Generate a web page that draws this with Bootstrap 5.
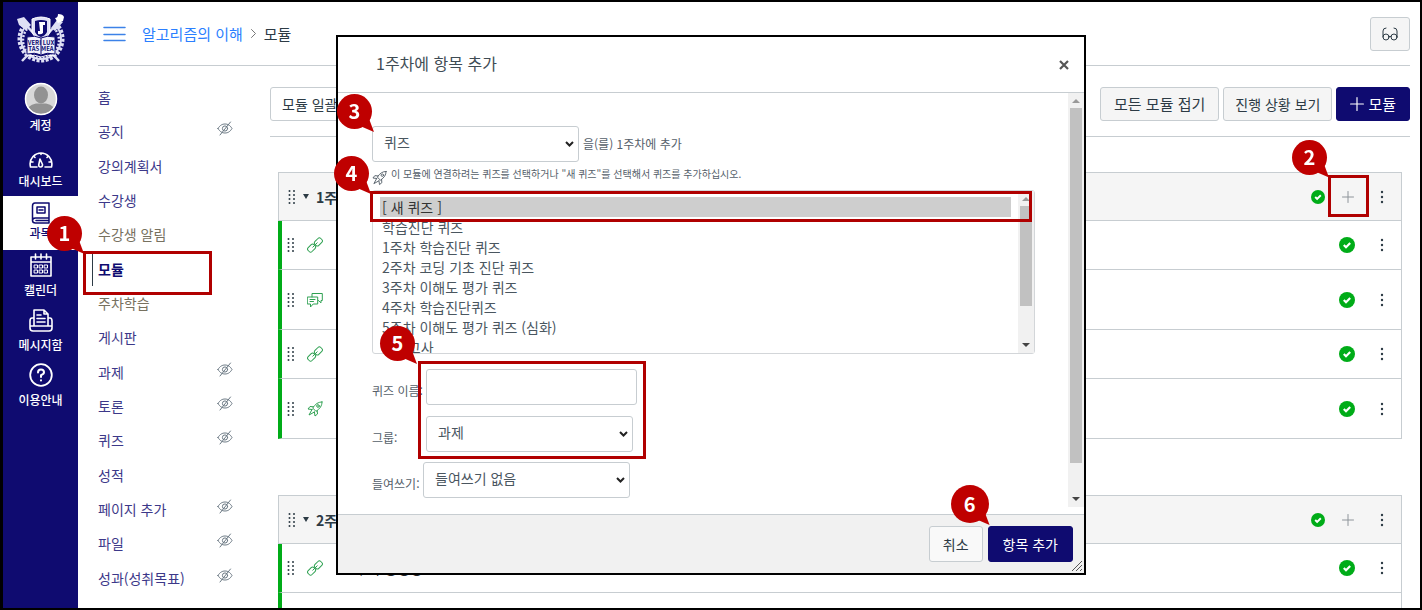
<!DOCTYPE html>
<html lang="ko">
<head>
<meta charset="utf-8">
<meta name="viewport" content="width=device-width, initial-scale=1">
<title>알고리즘의 이해 - 모듈</title>
<link href="https://cdn.jsdelivr.net/npm/bootstrap@5.3.0/dist/css/bootstrap.min.css" rel="stylesheet">
<style>
:root{--navy:#0f0b70;--line:#c7cdd1;--ink:#2d3b45;--alert:#bf0000}
body{font-family:"Noto Sans CJK KR","Noto Sans",sans-serif;font-size:14px;line-height:20px;color:var(--ink)}
a{text-decoration:none}
.frame{border:2px solid #000;border-left-width:3px}
.ic{display:block;fill:none;stroke:currentColor;stroke-width:1;stroke-linecap:round;stroke-linejoin:round}
.global-nav{width:75px;background:var(--navy);font-size:12px;font-weight:500;line-height:18px}
.global-nav a{color:#fff;height:55px;padding-bottom:6px}
.global-nav a.account{height:59px}
.global-nav a.current{background:#fff;color:var(--navy);height:54px;padding-bottom:8px}
.main-area{padding:0 10px 0 20px;min-width:0}
.page-head{height:64px;border-bottom:1px solid var(--line);font-size:15px}
.page-head a{color:#2b7fff}
.tool-btn{--bs-btn-color:#2d3b45;--bs-btn-bg:#f5f5f5;--bs-btn-border-color:var(--line);--bs-btn-hover-bg:#e8e8e8;--bs-btn-hover-border-color:var(--line);--bs-btn-border-radius:3px;height:34px;padding:0 11px;font-size:14px;line-height:20px}
.tool-btn.large{font-size:15px;padding:0 13px}
.tool-btn.navy{--bs-btn-bg:var(--navy);--bs-btn-color:#fff;--bs-btn-border-color:var(--navy);--bs-btn-hover-bg:#1c188c;--bs-btn-hover-color:#fff}
.page-body,.course-nav{min-height:0}
.course-nav{width:180px;padding:14px 45px 13px 0}
.course-nav a{color:#3c3889}
.course-nav a.off{color:#77715f}
.course-nav a.active{color:var(--navy);font-weight:700}
.course-nav a.active::before{content:"";position:absolute;left:-6px;top:0;height:100%;border-left:1px solid #2d3b45}
.course-nav .ic{color:#6a7883;margin-top:-5px}
.toolbar-row{padding:21px 0 15px 0;border-bottom:1px solid var(--line);margin-left:-8px}
.module-box{border:1px solid var(--line);border-bottom:0;margin:35px 8px 0 0}
.module-box + .module-box{margin-top:56px}
.module-head{height:48px;background:#f5f5f5;padding:0 14px 0 9px;border-bottom:1px solid var(--line);font-weight:700}
.module-head .caret{margin:0 7px}
.add-cell{margin:0 23px 0 17px}
.module-row{height:49px;border-bottom:1px solid var(--line);border-left:4px solid #00ac18;margin-left:-1px;padding:0 14px 0 5px}
.module-row.tall{height:60px}
.module-row .type{color:#2fa152;margin-left:12px}
.module-row .state{margin-right:22px}
.icon-btn{background:none;border:0;padding:0;color:inherit}
.grip,.kebab{fill:#2d3b45}
.dialog-layer{position:fixed;inset:35px 0 auto 0;pointer-events:none}
.dialog-box{width:750px;max-width:100%;border:2px solid #000;background:#fff;pointer-events:auto}
.dialog-head{height:56px;padding:0 15px 0 38px;border-bottom:1px solid var(--line);color:#3f4c55}
.dialog-head h1{font-size:16px;line-height:24px;font-weight:400;padding-bottom:4px}
.dialog-content{padding:33px 49px 16px 34px;color:#55606a}
.dialog-foot{background:#f1f1f1;border-top:1px solid var(--line);padding:11px;gap:5px}
.dialog-foot .tool-btn{height:36px;padding:0 13px}
.dialog-foot .tool-btn.navy{padding:0 14px}
.dialog-foot .tool-btn:not(.navy){--bs-btn-bg:#f9f9f9}
.field{height:36px;border:1px solid var(--line);border-radius:3px;background-color:#fff;color:#4a565f;font-size:14px;line-height:20px;padding:5px 30px 9px 11px;width:207px;flex:none}
.field.form-select{background-position:right 3px center;background-size:11px 8px;background-image:url("data:image/svg+xml,%3Csvg xmlns='http://www.w3.org/2000/svg' viewBox='0 0 11 8'%3E%3Cpath d='M2 2l3.500 3.500L9 2' fill='none' stroke='%23222' stroke-width='2'/%3E%3C/svg%3E")}
input.field{width:211px}
.suffix{font-size:12px;line-height:16px}
.note{font-size:10px;line-height:16px}
.note .ic{margin:4px 0 -4px}
.list-wrap{margin-bottom:15px}
.stack{display:flex;flex-direction:column;gap:11px;margin-bottom:10px}
.lbl{font-size:12px;line-height:18px;padding-top:8px;width:54px;white-space:nowrap}
.lbl.narrow{width:51px}
.quiz-list{height:164px;border:1px solid #d3d6d9;border-radius:3px;padding:6px 23px 0 7px;overflow:hidden;color:#4a565f;font-size:14px;width:100%;display:block;scrollbar-width:none;background:#fff}
.quiz-list::-webkit-scrollbar{display:none}
.quiz-list option{height:20px;line-height:20px;padding:0 2px;min-height:0}
.quiz-list option:checked{background:#cecece linear-gradient(#cecece,#cecece);color:#333}
.bar{position:absolute;width:16px;background:#f1f1f1;display:flex;flex-direction:column;align-items:center;justify-content:space-between}
.bar svg{flex:none;height:15px}
.bar i{width:12px;background:#c1c1c1}
.bar.outer{right:0;top:0;bottom:7px}
.bar.outer i{flex:0 0 355px;margin-bottom:auto}
.bar.inner{right:1px;top:1px;bottom:1px}
.bar.inner i{flex:0 0 100px;margin-bottom:auto}
.ring{position:absolute;border:3px solid #b00000;z-index:3;pointer-events:none}
.pin{position:absolute;right:100%;bottom:100%;width:35px;height:35px;border-radius:50%;background:var(--alert);color:#fff;font-size:20px;font-weight:700;line-height:34px;text-align:center;z-index:4;pointer-events:none}
.pin::after{content:"";position:absolute;left:22px;top:22px;width:15px;height:16px;background:var(--alert);clip-path:polygon(0 60%,60% 0,100% 100%)}
.ring .pin{margin:0 4px 3px 0}
.ring-nav{left:-15px;right:21px;top:-1px;bottom:-9px}
.ring-plus{left:-14px;top:-12px;width:41px;height:42px}
.ring-list{left:-2px;right:3px;top:1px;height:31px}
.ring-fields{left:46px;width:228px;top:-8px;height:98px}
.ring-fields .pin{margin-right:6px}
.pin.on-corner{margin-bottom:-3px}
.pin.big{width:38px;height:38px;line-height:37px;margin:0 -1px 3px 0}
.pin.big::after{left:24px;top:24px}
.resize{position:absolute;right:1px;bottom:1px}
</style>
</head>
<body>
<svg class="d-none">
  <symbol id="eye" viewBox="0 0 16 15"><path d="M1 7.500C3 4 5.500 3 8 3s5 1 7 4.500C13 11 10.500 12 8 12S3 11 1 7.500zM13.500 1L3 14"/><circle cx="8" cy="7.500" r="2.600"/></symbol>
  <symbol id="link" viewBox="0 0 16 16"><rect x="7.300" y="2.200" width="8.200" height="5.400" rx="2" transform="rotate(-45 11.400 4.900)"/><rect x=".5" y="8.400" width="8.200" height="5.400" rx="2" transform="rotate(-45 4.600 11.100)"/><path d="M5.800 10.200l4.400-4.400"/></symbol>
  <symbol id="talk" viewBox="0 0 16 16"><path d="M5 5V1.500h10.300v7H14v2.300l-2.600-2.300M.7 5h10v7H6.200L3.500 15v-3H.7zM3 7.500h5M3 9.500h3.500"/></symbol>
  <symbol id="rocket" viewBox="0 0 16 16"><path d="M15 1c-4 0-6.500 2-9.300 6L9 10.400C13 7.500 15 5 15 1zM6.500 5.800L3 5.500 1 8l4 .5M10.200 9.500L10.500 13 8 15l-.6-4M5 8.500L2 14l5.400-3"/><circle cx="11" cy="5" r="1.300"/></symbol>
  <symbol id="grip" viewBox="0 0 8 16"><g stroke="none"><circle cx="1.500" cy="2" r="1"/><circle cx="1.500" cy="6" r="1"/><circle cx="1.500" cy="10" r="1"/><circle cx="1.500" cy="14" r="1"/><circle cx="6" cy="2" r="1"/><circle cx="6" cy="6" r="1"/><circle cx="6" cy="10" r="1"/><circle cx="6" cy="14" r="1"/></g></symbol>
  <symbol id="kebab" viewBox="0 0 10 14"><g stroke="none"><circle cx="5" cy="2" r="1.200"/><circle cx="5" cy="7" r="1.200"/><circle cx="5" cy="12" r="1.200"/></g></symbol>
  <symbol id="check" viewBox="0 0 16 16"><circle cx="8" cy="8" r="8" fill="#00ac18" stroke="none"/><path d="M4.800 8L7 10.200l4.200-4.200" fill="none" stroke="#fff" stroke-width="2.200"/></symbol>
  <symbol id="plus" viewBox="0 0 12 12"><path d="M6 .5v11M.5 6h11"/></symbol>
</svg>

<div class="frame vh-100 d-flex overflow-hidden">
  <nav class="global-nav d-flex flex-column flex-shrink-0 text-center" aria-label="전체 메뉴">
    <div class="d-flex justify-content-center pt-2 pb-3">
      <svg width="56" height="56" viewBox="0 0 56 56" fill="none" stroke="#dfe0f5" role="img" aria-label="로고">
        <path d="M12 14L46 51M44 14L9 51" stroke-width="2.500"/>
        <path d="M4 9l7-2 7 8-5 5-7-5zM38 18l6-8 6 2-8 9z" fill="#dfe0f5" stroke="none"/>
        <path d="M42 8q3 0 3-4 5 0 6 3l-1 4-5 2z" fill="#fff" stroke="none"/>
        <path d="M12 17A20 20 0 1 0 44 17" stroke="#dfe0f5" stroke-width="2"/>
        <path d="M11 15A22 22 0 1 0 45 15" stroke-width="3" stroke-dasharray="3 1.500"/>
        <path d="M14 19A18 18 0 1 0 42 19" stroke-width="2.500" stroke-dasharray="2 1.500"/>
        <path d="M19 9q9-4 18 0v13q-3 7-9 8-6-1-9-8z" fill="#dfe0f5" stroke="#fff" stroke-width="1"/>
        <path d="M22 11q6-2 12 0v11q-2 4-6 5-4-1-6-5z" fill="#0f0b70" stroke="none"/>
        <path d="M26 12h6v3h-2v8q-2 2-5 1v-3h2z" fill="#fff" stroke="none"/>
        <path d="M14 27q8-2 14 1 6-3 14-1v17q-8-2-14 1-6-3-14-1z" fill="#f0f1fb" stroke="#0f0b70"/>
        <path d="M28 28v16" stroke="#0f0b70" stroke-width="1"/>
        <path d="M14 46q8-2 14 1 6-3 14-1" stroke="#fff"/>
        <text x="28" y="35" text-anchor="middle" font-size="6" font-weight="700" fill="#0f0b70" stroke="none">VERI LUX</text>
        <text x="28" y="41" text-anchor="middle" font-size="6" font-weight="700" fill="#0f0b70" stroke="none">TAS MEA</text>
      </svg>
    </div>
    <a href="#" class="account d-flex flex-column align-items-center flex-shrink-0">
      <svg width="34" height="34" viewBox="0 0 34 34" class="flex-shrink-0"><defs><clipPath id="face"><circle cx="17" cy="17" r="15"/></clipPath></defs><circle cx="17" cy="17" r="16" fill="#d8d8d8"/><g clip-path="url(#face)" fill="#929292"><ellipse cx="17" cy="13" rx="7" ry="8.500"/><path d="M2 34q0-11 10-12.500h10Q32 23 32 34z"/></g><circle cx="17" cy="17" r="15.500" fill="none" stroke="#fff" stroke-width="1.500"/></svg>
      <span>계정</span></a>
    <a href="#" class="d-flex flex-column align-items-center justify-content-end flex-shrink-0">
      <svg class="ic mb-1" width="24" height="17" viewBox="0 0 24 17"><path d="M8 16H1.500Q0 10 4 5.500 7.500 2 12 2t8 3.500q4 4.500 2.500 10.500H16M11 8l2.500 5.500q0 2.500-1.800 2.500-2 0-2-2zM12 2v1.500M5 5.500l1 1M19 5.500l-1 1M2.500 11H4M20 11h1.500" stroke-width="1.600"/></svg>
      <span>대시보드</span></a>
    <a href="#" class="current d-flex flex-column align-items-center justify-content-end flex-shrink-0">
      <svg class="ic" width="20" height="22" viewBox="0 0 20 22"><path d="M18 16H4.500Q1.500 16 1.500 18.500T4.500 21H18zV1H4Q1.500 1 1.500 4v14.500M6 5h8v6H6zM8 8h4M17 18.500H5" stroke-width="1.500"/></svg>
      <span>과목</span></a>
    <a href="#" class="d-flex flex-column align-items-center justify-content-end flex-shrink-0">
      <svg class="ic mb-1" width="22" height="24" viewBox="0 0 22 24"><path d="M1 4h20v19H1zM1 9h20M5.500 1v5M11 1v5M16.500 1v5" stroke-width="1.600"/><path d="M4.500 12h3v3h-3zM9.500 12h3v3h-3zM14.500 12h3v3h-3zM4.500 17h3v3h-3zM9.500 17h3v3h-3zM14.500 17h3v3h-3z" stroke-width="1"/></svg>
      <span>캘린더</span></a>
    <a href="#" class="d-flex flex-column align-items-center justify-content-end flex-shrink-0">
      <svg class="ic mb-1" width="24" height="23" viewBox="0 0 24 23"><path d="M5 17V1h10l4 4v12M15 1v4h4M8 6h4M8 9.500h8M8 13h8M5 9H3q-2 0-2 3v7q0 3 3 3h16q3 0 3-3v-7q0-3-2-3h-2M1 17h22" stroke-width="1.600"/></svg>
      <span>메시지함</span></a>
    <a href="#" class="d-flex flex-column align-items-center justify-content-end flex-shrink-0">
      <svg class="ic mb-1" width="24" height="24" viewBox="0 0 24 24"><circle cx="12" cy="12" r="10.800" stroke-width="1.800"/><path d="M9 9.500Q9 6.500 12 6.500t3 2.800Q15 11 12 12.200V14M12 17.200v.2" stroke-width="2"/></svg>
      <span>이용안내</span></a>
  </nav>

  <div class="main-area d-flex flex-column flex-fill">
    <header class="page-head d-flex align-items-center flex-shrink-0">
      <button type="button" class="icon-btn ms-1" aria-label="메뉴"><svg class="ic" width="24" height="16" viewBox="0 0 24 16"><path d="M2 1.500h21M2 8.500h21M2 14.500h21" stroke="#3c82e8" stroke-width="1.500"/></svg></button>
      <nav class="d-flex align-items-center flex-fill ms-3 gap-2" aria-label="위치"><a href="#">알고리즘의 이해</a><svg class="ic" width="5" height="9" viewBox="0 0 5 9"><path d="M.5.5l4 4-4 4" stroke="#777"/></svg><span>모듈</span></nav>
      <button type="button" class="btn tool-btn" aria-label="학생 보기"><svg class="ic" width="16" height="14" viewBox="0 0 16 14"><circle cx="4" cy="10" r="3"/><circle cx="12" cy="10" r="3"/><path d="M1 10V4q0-3 3-3M15 10V4q0-3-3-3M7 9.500q1-.7 2 0"/></svg></button>
    </header>
    <div class="page-body d-flex flex-fill">
      <nav class="course-nav d-flex flex-column flex-shrink-0" aria-label="과목 메뉴">
        <a href="#" class="flex-fill d-flex align-items-center">홈</a>
        <a href="#" class="flex-fill d-flex align-items-center justify-content-between">공지<svg class="ic" width="16" height="15"><use href="#eye"/></svg></a>
        <a href="#" class="flex-fill d-flex align-items-center">강의계획서</a>
        <a href="#" class="flex-fill d-flex align-items-center">수강생</a>
        <a href="#" class="off flex-fill d-flex align-items-center">수강생 알림</a>
        <a href="#" class="active position-relative flex-fill d-flex align-items-center">모듈<span class="ring ring-nav"><span class="pin">1</span></span></a>
        <a href="#" class="off flex-fill d-flex align-items-center">주차학습</a>
        <a href="#" class="flex-fill d-flex align-items-center">게시판</a>
        <a href="#" class="flex-fill d-flex align-items-center justify-content-between">과제<svg class="ic" width="16" height="15"><use href="#eye"/></svg></a>
        <a href="#" class="flex-fill d-flex align-items-center justify-content-between">토론<svg class="ic" width="16" height="15"><use href="#eye"/></svg></a>
        <a href="#" class="flex-fill d-flex align-items-center justify-content-between">퀴즈<svg class="ic" width="16" height="15"><use href="#eye"/></svg></a>
        <a href="#" class="flex-fill d-flex align-items-center">성적</a>
        <a href="#" class="flex-fill d-flex align-items-center justify-content-between">페이지 추가<svg class="ic" width="16" height="15"><use href="#eye"/></svg></a>
        <a href="#" class="flex-fill d-flex align-items-center justify-content-between">파일<svg class="ic" width="16" height="15"><use href="#eye"/></svg></a>
        <a href="#" class="flex-fill d-flex align-items-center justify-content-between">성과(성취목표)<svg class="ic" width="16" height="15"><use href="#eye"/></svg></a>
      </nav>
      <main class="flex-fill">
        <div class="toolbar-row d-flex gap-1">
          <button type="button" class="btn tool-btn bg-white me-auto">모듈 일괄 편집</button>
          <button type="button" class="btn tool-btn large">모든 모듈 접기</button>
          <button type="button" class="btn tool-btn">진행 상황 보기</button>
          <button type="button" class="btn tool-btn large navy d-flex align-items-center"><svg class="ic me-1" width="14" height="14"><use href="#plus"/></svg>모듈</button>
        </div>
        <section class="module-box">
          <div class="module-head d-flex align-items-center">
            <svg class="grip" width="8" height="16"><use href="#grip"/></svg>
            <svg class="caret" width="6" height="5" viewBox="0 0 6 5"><path d="M0 0h6L3 5z" fill="#2d3b45"/></svg>
            <span class="me-auto">1주차</span>
            <svg width="14" height="14"><use href="#check"/></svg>
            <span class="add-cell position-relative"><button type="button" class="icon-btn" aria-label="항목 추가"><svg class="ic text-secondary opacity-75" width="12" height="12"><use href="#plus"/></svg></button><span class="ring ring-plus"><span class="pin">2</span></span></span>
            <button type="button" class="icon-btn" aria-label="설정"><svg class="d-block kebab" width="10" height="14"><use href="#kebab"/></svg></button>
          </div>
          <div class="module-row d-flex align-items-center"><svg class="grip" width="8" height="16"><use href="#grip"/></svg><svg class="ic type me-auto" width="16" height="16"><use href="#link"/></svg><svg class="state" width="16" height="16"><use href="#check"/></svg><button type="button" class="icon-btn" aria-label="설정"><svg class="d-block kebab" width="10" height="14"><use href="#kebab"/></svg></button></div>
          <div class="module-row tall d-flex align-items-center"><svg class="grip" width="8" height="16"><use href="#grip"/></svg><svg class="ic type me-auto" width="16" height="16"><use href="#talk"/></svg><svg class="state" width="16" height="16"><use href="#check"/></svg><button type="button" class="icon-btn" aria-label="설정"><svg class="d-block kebab" width="10" height="14"><use href="#kebab"/></svg></button></div>
          <div class="module-row d-flex align-items-center"><svg class="grip" width="8" height="16"><use href="#grip"/></svg><svg class="ic type me-auto" width="16" height="16"><use href="#link"/></svg><svg class="state" width="16" height="16"><use href="#check"/></svg><button type="button" class="icon-btn" aria-label="설정"><svg class="d-block kebab" width="10" height="14"><use href="#kebab"/></svg></button></div>
          <div class="module-row tall d-flex align-items-center"><svg class="grip" width="8" height="16"><use href="#grip"/></svg><svg class="ic type me-auto" width="16" height="16"><use href="#rocket"/></svg><svg class="state" width="16" height="16"><use href="#check"/></svg><button type="button" class="icon-btn" aria-label="설정"><svg class="d-block kebab" width="10" height="14"><use href="#kebab"/></svg></button></div>
        </section>
        <section class="module-box">
          <div class="module-head d-flex align-items-center">
            <svg class="grip" width="8" height="16"><use href="#grip"/></svg>
            <svg class="caret" width="6" height="5" viewBox="0 0 6 5"><path d="M0 0h6L3 5z" fill="#2d3b45"/></svg>
            <span class="me-auto">2주차</span>
            <svg width="14" height="14"><use href="#check"/></svg>
            <span class="add-cell"><button type="button" class="icon-btn" aria-label="항목 추가"><svg class="ic text-secondary opacity-75" width="12" height="12"><use href="#plus"/></svg></button></span>
            <button type="button" class="icon-btn" aria-label="설정"><svg class="d-block kebab" width="10" height="14"><use href="#kebab"/></svg></button>
          </div>
          <div class="module-row d-flex align-items-center"><svg class="grip" width="8" height="16"><use href="#grip"/></svg><svg class="ic type" width="16" height="16"><use href="#link"/></svg><a href="#" class="ms-4 me-auto text-body">2주차 동영상</a><svg class="state" width="16" height="16"><use href="#check"/></svg><button type="button" class="icon-btn" aria-label="설정"><svg class="d-block kebab" width="10" height="14"><use href="#kebab"/></svg></button></div>
          <div class="module-row tall"></div>
        </section>
      </main>
    </div>
  </div>
</div>

<div class="dialog-layer">
  <form class="dialog-box mx-auto" role="dialog" aria-labelledby="dlg-title">
    <div class="dialog-head d-flex align-items-center justify-content-between">
      <h1 class="m-0" id="dlg-title">1주차에 항목 추가</h1>
      <button type="button" class="icon-btn" aria-label="닫기"><svg class="d-block" width="10" height="10" viewBox="0 0 10 10"><path d="M1 1l8 8M9 1L1 9" stroke="#555" stroke-width="2.200"/></svg></button>
    </div>
    <div class="position-relative">
      <div class="dialog-content">
        <div class="d-flex align-items-center gap-1 position-relative">
          <select class="form-select field" id="kind"><option>퀴즈</option></select>
          <label for="kind" class="suffix">을(를) 1주차에 추가</label>
          <span class="position-absolute top-0 start-0"><span class="pin on-corner">3</span></span>
        </div>
        <div class="d-flex gap-1 note pt-1 mb-2"><svg class="ic" width="15" height="16"><use href="#rocket"/></svg><label for="quizzes">이 모듈에 연결하려는 퀴즈를 선택하거나 "새 퀴즈"를 선택해서 퀴즈를 추가하십시오.</label></div>
        <div class="list-wrap position-relative">
          <select class="quiz-list" id="quizzes" size="8">
            <option selected>[ 새 퀴즈 ]</option><option>학습진단 퀴즈</option><option>1주차 학습진단 퀴즈</option><option>2주차 코딩 기초 진단 퀴즈</option><option>3주차 이해도 평가 퀴즈</option><option>4주차 학습진단퀴즈</option><option>5주차 이해도 평가 퀴즈 (심화)</option><option>중간고사</option>
          </select>
          <span class="bar inner"><svg width="8" viewBox="0 0 8 15"><path d="M0 10l4-4 4 4z" fill="#999"/></svg><i></i><svg width="8" viewBox="0 0 8 15"><path d="M0 5h8L4 9z" fill="#444"/></svg></span>
          <span class="ring ring-list"><span class="pin">4</span></span>
        </div>
        <div class="stack position-relative">
          <div class="d-flex align-items-center"><label class="lbl" for="qname">퀴즈 이름:</label><input class="field" id="qname" type="text"></div>
          <div class="d-flex align-items-center"><label class="lbl" for="grp">그룹:</label><select class="form-select field" id="grp"><option>과제</option></select></div>
          <span class="ring ring-fields"><span class="pin">5</span></span>
        </div>
        <div class="d-flex align-items-center"><label class="lbl narrow" for="indent">들여쓰기:</label><select class="form-select field" id="indent"><option>들여쓰기 없음</option></select></div>
      </div>
      <span class="bar outer"><svg width="8" viewBox="0 0 8 15"><path d="M0 10l4-4 4 4z" fill="#999"/></svg><i></i><svg width="8" viewBox="0 0 8 15"><path d="M0 5h8L4 9z" fill="#444"/></svg></span>
    </div>
    <div class="dialog-foot d-flex justify-content-end position-relative">
      <button type="button" class="btn tool-btn">취소</button>
      <span class="position-relative"><button type="submit" class="btn tool-btn navy">항목 추가</button><span class="position-absolute top-0 start-0"><span class="pin big">6</span></span></span>
      <svg class="resize" width="12" height="12" viewBox="0 0 12 12"><path d="M1 11L11 1M5 11l6-6M9 11l2-2" stroke="#555"/></svg>
    </div>
  </form>
</div>
<script src="https://cdn.jsdelivr.net/npm/bootstrap@5.3.0/dist/js/bootstrap.bundle.min.js"></script>
</body>
</html>
